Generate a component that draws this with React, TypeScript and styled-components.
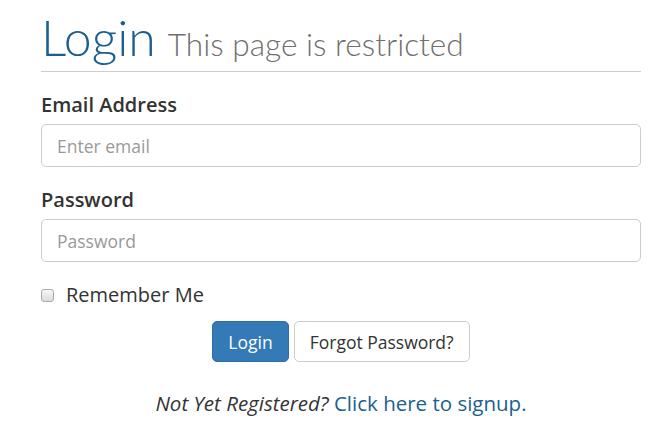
import React from "react";
import styled, { createGlobalStyle } from "styled-components";

const Global = createGlobalStyle`
  html, body { margin: 0; padding: 0; background: #fff; }
  body { font-family: "Open Sans", "Liberation Sans", sans-serif; color: #333; }
  * { box-sizing: border-box; }
`;

const Page = styled.div`
  padding: 11px 26px 0 41px;
  width: 667px;
`;

const Header = styled.div`
  display: flex;
  align-items: baseline;
  gap: 12px;
  padding-bottom: 8px;
  border-bottom: 1px solid #ccc;
`;

const Title = styled.h1`
  margin: 0;
  font-family: "Lato", sans-serif;
  font-weight: 300;
  font-size: 50px;
  line-height: 52px;
  color: #1b5f8e;
`;

const Subtitle = styled.span`
  font-family: "Lato", sans-serif;
  font-weight: 300;
  font-size: 31.6px;
  color: #6f6f6f;
`;

const Form = styled.form`
  display: flex;
  flex-direction: column;
  padding-top: 20px;
`;

const Group = styled.div`
  display: flex;
  flex-direction: column;
  gap: 6px;
  margin-bottom: 20px;
`;

const Label = styled.label`
  font-size: 20px;
  font-weight: 600;
  line-height: 26px;
  color: #333;
`;

const Input = styled.input`
  width: 100%;
  height: 43px;
  padding: 0 15px;
  font-family: "Open Sans", sans-serif;
  font-size: 17.5px;
  border: 1px solid #ccc;
  border-radius: 5px;
  color: #555;
  &::placeholder { color: #999; }
`;

const CheckRow = styled.label`
  display: flex;
  align-items: center;
  gap: 12px;
  font-size: 20px;
  line-height: 26px;
  margin-bottom: 13px;
`;

const Box = styled.span`
  width: 13px;
  height: 13px;
  border: 1px solid #aaa;
  border-radius: 3px;
  background: linear-gradient(#f6f6f6, #dcdcdc);
`;

const Actions = styled.div`
  display: flex;
  justify-content: center;
  gap: 5px;
`;

const Button = styled.button<{ $primary?: boolean }>`
  height: 41px;
  padding: 0 15px;
  font-family: "Open Sans", sans-serif;
  font-size: 17.5px;
  border-radius: 5px;
  border: 1px solid ${(p) => (p.$primary ? "#2e6da4" : "#ccc")};
  background: ${(p) => (p.$primary ? "#337ab7" : "#fff")};
  color: ${(p) => (p.$primary ? "#fff" : "#333")};
`;

const Footer = styled.p`
  margin: 27px 0 0;
  text-align: center;
  font-size: 20.5px;
  line-height: 28px;
`;

const Em = styled.em`
  color: #333;
`;

const Link = styled.a`
  color: #1b5f8e;
  text-decoration: none;
`;

export default function App() {
  return (
    <Page>
      <Global />
      <Header>
        <Title>Login</Title>
        <Subtitle>This page is restricted</Subtitle>
      </Header>
      <Form onSubmit={(e) => e.preventDefault()}>
        <Group>
          <Label>Email Address</Label>
          <Input type="email" placeholder="Enter email" />
        </Group>
        <Group>
          <Label>Password</Label>
          <Input type="password" placeholder="Password" />
        </Group>
        <CheckRow>
          <Box />
          Remember Me
        </CheckRow>
        <Actions>
          <Button $primary type="submit">Login</Button>
          <Button type="button">Forgot Password?</Button>
        </Actions>
      </Form>
      <Footer>
        <Em>Not Yet Registered?</Em> <Link href="#">Click here to signup.</Link>
      </Footer>
    </Page>
  );
}
